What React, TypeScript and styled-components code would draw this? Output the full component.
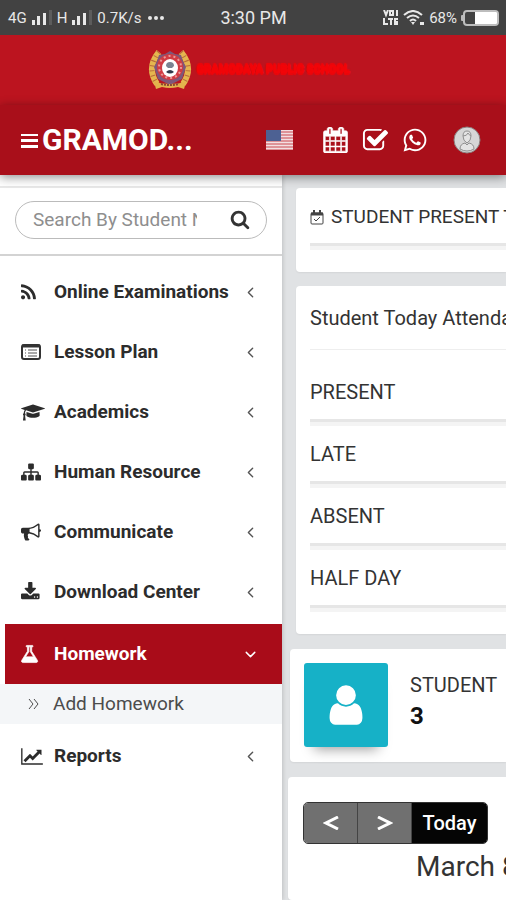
import React from 'react';
import styled, { createGlobalStyle } from 'styled-components';
import { FaWhatsapp } from 'react-icons/fa';
import { FiChevronDown, FiChevronLeft } from 'react-icons/fi';

const GlobalStyle = createGlobalStyle`
  *, *::before, *::after { box-sizing: border-box; }
  body {
    margin: 0;
    background: #e0e2e4;
    color: #333;
    font-family: Roboto, "Liberation Sans", sans-serif;
    font-size: 18px;
    line-height: 24px;
  }
  button, input { font: inherit; color: inherit; }
  button { padding: 0; border: 0; background: none; cursor: pointer; }
  a { color: inherit; text-decoration: none; }
  svg { display: block; flex: none; }
`;

const Page = styled.div`
  display: flex;
  flex-direction: column;
  height: 100vh;
  overflow: hidden;
`;

const StatusBar = styled.div`
  display: grid;
  grid-template-columns: 1fr auto 1fr;
  align-items: center;
  flex: none;
  height: 35px;
  padding: 0 7px 0 8px;
  background: #424242;
  color: #e8e8e8;
  font-size: 15px;
`;

const StatusGroup = styled.div<{ $end?: boolean }>`
  display: flex;
  align-items: center;
  justify-content: ${(p) => (p.$end ? 'flex-end' : 'flex-start')};
  gap: ${(p) => (p.$end ? 4 : 5)}px;
  white-space: nowrap;
`;

const Clock = styled.div`
  font-size: 18px;
`;

const Brand = styled.header`
  display: flex;
  align-items: center;
  justify-content: center;
  flex: none;
  gap: 4px;
  height: 70px;
  padding-right: 8px;
  background: #bc141f;
`;

const BrandName = styled.span`
  color: #f20408;
  font-size: 11px;
  font-weight: 900;
  -webkit-text-stroke: 1px #f20408;
  text-shadow: 0 2px 1px #f20408, 0 -2px 1px #f20408;
  white-space: nowrap;
`;

const NavBar = styled.nav`
  position: relative;
  z-index: 1;
  display: flex;
  align-items: center;
  flex: none;
  height: 70px;
  padding: 0 25px 0 21px;
  background: #a90f1a;
  color: #fff;
  box-shadow: 0 2px 10px rgba(0, 0, 0, 0.45);
`;

const SchoolTitle = styled.button`
  display: flex;
  align-items: center;
  gap: 4px;
  font-size: 30px;
  font-weight: 700;
`;

const NavActions = styled.div`
  display: flex;
  align-items: center;
  margin-left: auto;
`;

const NavButton = styled.button<{ $before?: number }>`
  display: flex;
  margin-left: ${(p) => p.$before ?? 0}px;
`;

const Body = styled.div`
  display: flex;
  flex: 1;
  min-height: 0;
`;

const Sidebar = styled.aside`
  flex: none;
  width: 282px;
  padding-top: 11px;
  background: #fff;
  box-shadow: 1px 0 4px rgba(0, 0, 0, 0.15);
`;

const SearchArea = styled.form`
  padding: 13px 15px 15px;
  border-top: 2px solid #e8e8e8;
  border-bottom: 2px solid #d3d3d3;
`;

const SearchBox = styled.div`
  display: flex;
  align-items: center;
  height: 38px;
  padding: 0 16px 0 17px;
  border: 1px solid #bbb;
  border-radius: 19px;
`;

const SearchInput = styled.input`
  flex: 1;
  min-width: 0;
  margin-right: 33px;
  padding: 0;
  border: 0;
  outline: 0;
  background: none;
  font-size: 19px;
  &::placeholder { color: #8e8e8e; opacity: 1; }
`;

const Menu = styled.ul`
  margin: 0;
  padding: 6px 0 0;
  list-style: none;
`;

const MenuItem = styled.li<{ $active?: boolean }>`
  padding: ${(p) => (p.$active ? '2px 0' : '0')};
`;

const MenuLink = styled.a<{ $active?: boolean }>`
  display: flex;
  align-items: center;
  height: 60px;
  margin-left: 5px;
  padding: 0 23px 0 16px;
  background: ${(p) => (p.$active ? '#a90c19' : 'transparent')};
  color: ${(p) => (p.$active ? '#fff' : '#2c2c2c')};
  font-size: 19px;
  font-weight: 700;
`;

const MenuIcon = styled.span`
  display: flex;
  width: 33px;
`;

const MenuArrow = styled.span`
  display: flex;
  margin-left: auto;
`;

const SubLink = styled.a`
  display: flex;
  align-items: center;
  gap: 14px;
  height: 40px;
  padding-left: 28px;
  background: #f4f6f8;
  color: #4c4c4c;
  font-size: 19px;
`;

const Main = styled.main`
  display: flex;
  flex-direction: column;
  flex: 1;
  min-width: 0;
  overflow: hidden;
  padding-top: 13px;
  white-space: nowrap;
`;

const Card = styled.section<{ $left: number; $gap: number; $pad: string; $grow?: boolean }>`
  flex: ${(p) => (p.$grow ? '1 0 auto' : 'none')};
  margin: 0 0 ${(p) => p.$gap}px ${(p) => p.$left}px;
  padding: ${(p) => p.$pad};
  border-radius: 4px 0 0 4px;
  background: #fff;
  box-shadow: 0 1px 2px rgba(0, 0, 0, 0.06);
`;

const CardTitle = styled.h2`
  display: flex;
  align-items: center;
  gap: 7px;
  margin: 0;
  padding-bottom: 11px;
  font-size: 19px;
  font-weight: 400;
  line-height: 30px;
`;

const AttendanceTitle = styled(CardTitle)`
  margin-bottom: 28px;
  padding-bottom: 16px;
  border-bottom: 1px solid #eee;
  font-size: 20px;
`;

const Meter = styled.div`
  height: 7px;
  border-top: 3px solid #e6e6e6;
  background: #f4f4f4;
`;

const AttendanceRow = styled.div`
  display: flex;
  flex-direction: column;
  gap: 13px;
  height: 62px;
  font-size: 20px;
  line-height: 28px;
`;

const StudentCard = styled(Card)`
  display: flex;
  gap: 22px;
`;

const StudentTile = styled.div`
  display: flex;
  align-items: center;
  justify-content: center;
  width: 84px;
  height: 84px;
  border-radius: 3px;
  background: #16b1c7;
  color: #fff;
  box-shadow: 0 12px 12px -10px rgba(0, 0, 0, 0.4);
`;

const StudentCount = styled.div`
  padding-top: 6px;
  font-size: 20px;
  line-height: 32px;
  strong { display: block; color: #111; font-size: 24px; line-height: 30px; }
`;

const ButtonGroup = styled.div`
  display: inline-flex;
  height: 42px;
  border: 1px solid #333;
  border-radius: 5px;
  overflow: hidden;
`;

const CalendarButton = styled.button<{ $current?: boolean }>`
  display: flex;
  align-items: center;
  justify-content: center;
  width: ${(p) => (p.$current ? 75 : 54)}px;
  border-right: ${(p) => (p.$current ? '0' : '1px solid #444')};
  background: ${(p) => (p.$current ? '#050505' : '#707070')};
  color: #fff;
  font-size: 20px;
  font-weight: 500;
`;

const Month = styled.h2`
  margin: 7px 0 0 113px;
  font-size: 28px;
  font-weight: 400;
  line-height: 32px;
`;

type GlyphProps = { d: string; w: number; h: number; box?: string; bold?: number };
const Glyph = ({ d, w, h, box = '0 0 1792 1792', bold = 0 }: GlyphProps) => (
  <svg width={w} height={h} viewBox={box} fill="currentColor" stroke="currentColor" strokeWidth={bold} aria-hidden="true">
    <path d={d} />
  </svg>
);

const paths = {
  rss: 'M576 1344q0 80-56 136t-136 56-136-56-56-136 56-136 136-56 136 56 56 136zm512 123q2 28-17 48-18 21-47 21h-135q-25 0-43-16.5t-20-41.5q-22-229-184.5-391.5t-391.5-184.5q-25-2-41.5-20t-16.5-43v-135q0-29 21-47 17-17 43-17h5q160 13 306 80.5t259 181.5q114 113 181.5 259t80.5 306zm512 2q2 27-18 47-18 20-46 20h-143q-26 0-44.5-17.5t-19.5-42.5q-12-215-101-408.5t-231.5-336-336-231.5-408.5-102q-25-1-42.5-19.5t-17.5-43.5v-143q0-28 20-46 18-18 44-18h3q262 13 501.5 120t425.5 294q187 186 294 425.5t120 501.5z',
  cap: 'M1774 836l18 316q4 69-82 128t-235 93.5-323 34.5-323-34.5-235-93.5-82-128l18-316 574 181q22 7 48 7t48-7zm530-324q0 23-22 31l-1120 352q-4 1-10 1t-10-1l-652-206q-43 34-71 111.5t-34 178.5q63 36 63 109 0 69-58 107l58 433q2 14-8 25-9 11-24 11h-192q-15 0-24-11-10-11-8-25l58-433q-58-38-58-107 0-73 65-111 11-207 98-330l-333-104q-22-8-22-31t22-31l1120-352q4-1 10-1t10 1l1120 352q22 8 22 31z',
  sitemap: 'M1792 1248v320q0 40-28 68t-68 28h-320q-40 0-68-28t-28-68v-320q0-40 28-68t68-28h96v-192h-512v192h96q40 0 68 28t28 68v320q0 40-28 68t-68 28h-320q-40 0-68-28t-28-68v-320q0-40 28-68t68-28h96v-192h-512v192h96q40 0 68 28t28 68v320q0 40-28 68t-68 28h-320q-40 0-68-28t-28-68v-320q0-40 28-68t68-28h96v-192q0-52 38-90t90-38h512v-192h-96q-40 0-68-28t-28-68v-320q0-40 28-68t68-28h320q40 0 68 28t28 68v320q0 40-28 68t-68 28h-96v192h512q52 0 90 38t38 90v192h96q40 0 68 28t28 68z',
  bullhorn: 'M1664 640q53 0 90.5 37.5t37.5 90.5-37.5 90.5-90.5 37.5v384q0 52-38 90t-90 38q-417-347-812-380-58 19-91 66t-31 100.5 40 92.5q-20 33-23 65.5t6 58 33.5 55 48 50 61.5 50.5q-29 58-111.5 83t-168.5 11.5-132-55.5q-7-23-29.5-87.5t-32-94.5-23-89-15-101 3.5-98.5 22-110.5h-122q-66 0-113-47t-47-113v-192q0-66 47-113t113-47h480q435 0 896-384 52 0 90 38t38 90v384zm-128 604v-954q-394 302-768 343v270q377 42 768 341z',
  download: 'M1344 1344q0-26-19-45t-45-19-45 19-19 45 19 45 45 19 45-19 19-45zm256 0q0-26-19-45t-45-19-45 19-19 45 19 45 45 19 45-19 19-45zm128-224v320q0 40-28 68t-68 28h-1472q-40 0-68-28t-28-68v-320q0-40 28-68t68-28h465l135 136q58 56 136 56t136-56l136-136h464q40 0 68 28t28 68zm-325-569q17 41-14 70l-448 448q-18 19-45 19t-45-19l-448-448q-31-29-14-70 17-39 59-39h256v-448q0-26 19-45t45-19h256q26 0 45 19t19 45v448h256q42 0 59 39z',
  flask: 'M1591 1448q56 89 21.5 152.5t-140.5 63.5h-1152q-106 0-140.5-63.5t21.5-152.5l503-793v-399h-64q-26 0-45-19t-19-45 19-45 45-19h512q26 0 45 19t19 45-19 45-45 19h-64v399zm-779-725l-272 429h712l-272-429-20-31v-436h-128v436z',
  chart: 'M2048 1536v128h-2048v-1536h128v1408h1920zm-128-1248v435q0 21-19.5 29.5t-35.5-7.5l-121-121-633 633q-10 10-23 10t-23-10l-233-233-416 416-192-192 585-585q10-10 23-10t23 10l233 233 464-464-121-121q-16-16-7.5-35.5t29.5-19.5h435q14 0 23 9t9 23z',
  head: 'M1280 512q0 159-112.500 271.500t-271.500 112.500-271.500-112.500-112.500-271.500 112.500-271.500 271.500-112.500 271.500 112.500 112.500 271.500z',
  torso: 'M1536 1399q0 109-62.5 187t-150.500 78h-854q-88 0-150.500-78t-62.500-187q0-85 8.500-160.500t31.500-152 58.500-131 94-89 134.500-34.500q131 128 313 128t313-128q76 0 134.500 34.500t94 89 58.500 131 31.500 152 8.500 160.500z',
  search: 'M1216 832q0-185-131.5-316.5t-316.5-131.5-316.5 131.5-131.5 316.5 131.5 316.5 316.5 131.5 316.5-131.5 131.5-316.5zm512 832q0 52-38 90t-90 38q-54 0-90-38l-343-342q-179 124-399 124-143 0-273.5-55.5t-225-150-150-225-55.5-273.5 55.5-273.5 150-225 225-150 273.5-55.5 273.5 55.5 225 150 150 225 55.5 273.5q0 220-124 399l343 343q37 37 37 90z',
  check: 'M1472 930v318q0 119-84.5 203.5t-203.5 84.5h-832q-119 0-203.5-84.5t-84.5-203.5v-832q0-119 84.5-203.5t203.5-84.5h832q63 0 117 25 15 7 18 23 3 17-9 29l-49 49q-10 10-23 10-3 0-9-2-23-6-45-6h-832q-66 0-113 47t-47 113v832q0 66 47 113t113 47h832q66 0 113-47t47-113v-254q0-13 9-22l64-64q10-10 23-10 6 0 12 3 20 8 20 29zm231-489l-814 814q-24 24-57 24t-57-24l-430-430q-24-24-24-57t24-57l110-110q24-24 57-24t57 24l263 263 647-647q24-24 57-24t57 24l110 110q24 24 24 57t-24 57z',
  calendar: 'M192 1664h288v-288h-288v288zm352 0h320v-288h-320v288zm-352-352h288v-320h-288v320zm352 0h320v-320h-320v320zm-352-384h288v-288h-288v288zm736 736h320v-288h-320v288zm-384-736h320v-288h-320v288zm768 736h288v-288h-288v288zm-384-352h320v-320h-320v320zm-352-864v-288q0-13-9.5-22.5t-22.5-9.5h-64q-13 0-22.5 9.5t-9.5 22.5v288q0 13 9.5 22.5t22.5 9.5h64q13 0 22.5-9.5t9.5-22.5zm736 864h288v-320h-288v320zm-384-384h320v-288h-320v288zm384 0h288v-288h-288v288zm32-480v-288q0-13-9.5-22.5t-22.5-9.5h-64q-13 0-22.5 9.5t-9.5 22.5v288q0 13 9.5 22.5t22.5 9.5h64q13 0 22.5-9.5t9.5-22.5zm384-64v1280q0 52-38 90t-90 38h-1408q-52 0-90-38t-38-90v-1280q0-52 38-90t90-38h128v-96q0-66 47-113t113-47h64q66 0 113 47t47 113v96h384v-96q0-66 47-113t113-47h64q66 0 113 47t47 113v96h128q52 0 90 38t38 90z',
};

const Signal = () => (
  <svg width="20" height="16" viewBox="0 0 20 16" fill="#e8e8e8" aria-hidden="true">
    <rect x="0" y="10" width="3" height="5" /><rect x="5" y="6" width="3" height="9" />
    <rect x="11" y="3" width="3" height="12" /><rect x="17" y="0" width="3" height="15" fill="#5c5c5c" />
  </svg>
);

const More = () => (
  <svg width="18" height="4" viewBox="0 0 18 4" fill="#e8e8e8" aria-hidden="true">
    <circle cx="3" cy="2" r="2" /><circle cx="9" cy="2" r="2" /><circle cx="15" cy="2" r="2" />
  </svg>
);

const Volte = () => (
  <svg width="16" height="15" viewBox="0 0 16 15" fill="none" stroke="#e8e8e8" strokeWidth="2" aria-hidden="true">
    <path d="M1 0l2 5 2-5M7 1h3v4H7zM14 0v6M1 8v6h4M5 9h5M8 9v6M15 9h-3v5h3M12 12h3" />
  </svg>
);

const Wifi = () => (
  <svg width="22" height="16" viewBox="0 0 22 16" fill="none" stroke="#e8e8e8" strokeWidth="2" aria-hidden="true">
    <path d="M1 5q9-8 18 0M4 8q6-5 12 0M7 11q3-3 6 0" />
    <path d="M8 12h4l-2 3z" fill="#e8e8e8" stroke="none" /><rect x="17" y="12" width="4" height="3" fill="#e8e8e8" stroke="none" />
  </svg>
);

const Battery = () => (
  <svg width="38" height="16" viewBox="0 0 38 16" aria-hidden="true">
    <rect x="0" y="5" width="3" height="6" rx="1" fill="#bbb" />
    <rect x="3" y="1" width="34" height="14" rx="3" fill="#424242" stroke="#bdbdbd" strokeWidth="2" />
    <path d="M14 2h21q1 0 1 1v10q0 1-1 1H14z" fill="#fff" />
  </svg>
);

const Crest = () => (
  <svg width="44" height="40" viewBox="0 0 44 40" aria-hidden="true">
    <g fill="none" stroke="#e5b64f" strokeWidth="6">
      <path d="M11 2Q-2 18 9 34" /><path d="M33 2q13 16 2 32" />
    </g>
    <g fill="none" stroke="#b86a3a" strokeWidth="5" strokeDasharray="1 4">
      <path d="M11 2Q-2 18 9 34" /><path d="M33 2q13 16 2 32" />
    </g>
    <path d="M22 1l5 3 6 1 2 6 3 6-2 6-2 6-6 3-6 3-6-3-6-3-2-6-2-6 3-6 2-6 6-1z" fill="#7d587a" />
    <circle cx="22" cy="17" r="13" fill="#d13b43" />
    <circle cx="22" cy="17" r="11" fill="none" stroke="#e99a98" strokeWidth="2" strokeDasharray="2 3" />
    <ellipse cx="22" cy="18" rx="8" ry="9" fill="#fff" />
    <path d="M18 16q0-4 4-4t4 4l-2 2h-4z" fill="#7b8492" /><path d="M18 22q4-4 8 0-4 3-8 0z" fill="#30394b" />
    <path d="M6 32q16 4 32 0l-2 7-6-2q-8 2-16 0l-6 2z" fill="#e3b24c" />
    <path d="M13 34q9 2 18 0" fill="none" stroke="#8b4834" strokeWidth="2" strokeDasharray="2 1" />
  </svg>
);

const Burger = () => (
  <svg width="17" height="16" viewBox="0 0 17 16" fill="#fff" aria-hidden="true">
    <rect y="2" width="17" height="2" /><rect y="7" width="17" height="3" /><rect y="13" width="17" height="3" />
  </svg>
);

const Flag = () => (
  <svg width="27" height="20" viewBox="0 0 27 20" aria-hidden="true">
    <rect width="27" height="20" fill="#f3dfe1" />
    <path d="M0 2h27M0 5h27M0 8h27M0 11h27M0 14h27M0 17h27M0 20h27" stroke="#c9474f" strokeWidth="1" />
    <rect width="15" height="11" fill="#4d6193" />
  </svg>
);

const Avatar = () => (
  <svg width="28" height="28" viewBox="0 0 28 28" aria-hidden="true">
    <circle cx="14" cy="14" r="13" fill="#d6d6d6" stroke="#8c7f7f" />
    <g fill="#e3e3e3" stroke="#8f8f8f" strokeWidth="1">
      <path d="M7 23q0-5 5-6l2 2 2-2q5 1 5 6-7 4-14 0z" />
      <path d="M10 10q0-5 4-5t4 5q0 5-4 7-4-2-4-7z" /><path d="M10 10q4 0 5-3 1 2 3 3" fill="none" />
    </g>
  </svg>
);

const ListCard = () => (
  <svg width="20" height="16" viewBox="0 0 20 16" fill="none" stroke="#333" aria-hidden="true">
    <rect x="1" y="1" width="18" height="14" rx="2" strokeWidth="2" /><path d="M1 2h18" strokeWidth="3" />
    <path d="M4 6h1M4 9h1M4 12h1M7 6h9M7 9h9M7 12h9" stroke="#555" strokeWidth="1" />
  </svg>
);

const CalendarCheck = () => (
  <svg width="14" height="15" viewBox="0 0 14 15" fill="none" stroke="#444" aria-hidden="true">
    <rect x="1" y="3" width="12" height="11" rx="1" /><path d="M1 4h12" strokeWidth="3" />
    <path d="M4 0v3M10 0v3" strokeWidth="2" /><path d="M4 9l2 2 4-4" />
  </svg>
);

const UserIcon = () => (
  <svg width="46" height="46" viewBox="0 0 1792 1792" fill="currentColor" aria-hidden="true">
    <path d={paths.head} /><path d={paths.torso} />
  </svg>
);

const Angle = ({ next }: { next?: boolean }) => (
  <svg width="16" height="14" viewBox="0 0 16 14" fill="none" stroke="#fff" strokeWidth="3" aria-hidden="true">
    <path d={next ? 'M1 1l12 6-12 6' : 'M15 1L3 7l12 6'} />
  </svg>
);

const items = [
  { label: 'Online Examinations', icon: <Glyph d={paths.rss} w={19} h={19} box="192 0 1792 1792" /> },
  { label: 'Lesson Plan', icon: <ListCard /> },
  { label: 'Academics', icon: <Glyph d={paths.cap} w={24} h={19} box="0 0 2304 1792" /> },
  { label: 'Human Resource', icon: <Glyph d={paths.sitemap} w={20} h={20} /> },
  { label: 'Communicate', icon: <Glyph d={paths.bullhorn} w={20} h={20} /> },
  { label: 'Download Center', icon: <Glyph d={paths.download} w={20} h={20} box="64 0 1792 1792" /> },
  { label: 'Homework', icon: <Glyph d={paths.flask} w={20} h={20} box="128 0 1792 1792" bold={60} />, sub: 'Add Homework' },
  { label: 'Reports', icon: <Glyph d={paths.chart} w={22} h={19} box="0 0 2048 1792" /> },
];

export default function App() {
  return (
    <Page>
      <GlobalStyle />
      <StatusBar>
        <StatusGroup>
          <span>4G</span><Signal /><span>H</span><Signal /><span>0.7K/s</span><More />
        </StatusGroup>
        <Clock>3:30 PM</Clock>
        <StatusGroup $end><Volte /><Wifi /><span>68%</span><Battery /></StatusGroup>
      </StatusBar>
      <Brand><Crest /><BrandName>GRAMODAYA PUBLIC SCHOOL</BrandName></Brand>
      <NavBar>
        <SchoolTitle><Burger />GRAMOD...</SchoolTitle>
        <NavActions>
          <NavButton aria-label="Language"><Flag /></NavButton>
          <NavButton $before={30} aria-label="Calendar"><Glyph d={paths.calendar} w={25} h={26} box="64 0 1664 1792" bold={40} /></NavButton>
          <NavButton $before={14} aria-label="Tasks"><Glyph d={paths.check} w={27} h={27} /></NavButton>
          <NavButton $before={13} aria-label="WhatsApp"><FaWhatsapp size={26} /></NavButton>
          <NavButton $before={25} aria-label="Profile"><Avatar /></NavButton>
        </NavActions>
      </NavBar>
      <Body>
        <Sidebar>
          <SearchArea>
            <SearchBox>
              <SearchInput type="text" aria-label="Search by student" placeholder="Search By Student Name" />
              <button type="button" aria-label="Search"><Glyph d={paths.search} w={20} h={20} box="0 128 1792 1664" /></button>
            </SearchBox>
          </SearchArea>
          <Menu>
            {items.map(({ label, icon, sub }) => (
              <MenuItem key={label} $active={!!sub}>
                <MenuLink href="#" $active={!!sub}>
                  <MenuIcon>{icon}</MenuIcon>{label}
                  <MenuArrow>{sub ? <FiChevronDown size={17} /> : <FiChevronLeft size={17} color="#555" />}</MenuArrow>
                </MenuLink>
                {sub && (
                  <SubLink href="#">
                    <svg width="11" height="12" viewBox="0 0 11 12" fill="none" stroke="currentColor" aria-hidden="true">
                      <path d="M1 1l4 5-4 5M6 1l4 5-4 5" />
                    </svg>
                    {sub}
                  </SubLink>
                )}
              </MenuItem>
            ))}
          </Menu>
        </Sidebar>
        <Main>
          <Card $left={14} $gap={14} $pad="14px 0 22px 14px">
            <CardTitle><CalendarCheck />STUDENT PRESENT TODAY</CardTitle>
            <Meter />
          </Card>
          <Card $left={14} $gap={15} $pad="17px 0 8px 14px">
            <AttendanceTitle>Student Today Attendance</AttendanceTitle>
            {['PRESENT', 'LATE', 'ABSENT', 'HALF DAY'].map((name) => (
              <AttendanceRow key={name}>{name}<Meter /></AttendanceRow>
            ))}
          </Card>
          <StudentCard $left={8} $gap={15} $pad="14px 0 15px 14px">
            <StudentTile><UserIcon /></StudentTile>
            <StudentCount>STUDENT<strong>3</strong></StudentCount>
          </StudentCard>
          <Card $left={6} $gap={0} $pad="25px 0 0 15px" $grow>
            <ButtonGroup>
              <CalendarButton aria-label="Previous"><Angle /></CalendarButton>
              <CalendarButton aria-label="Next"><Angle next /></CalendarButton>
              <CalendarButton $current>Today</CalendarButton>
            </ButtonGroup>
            <Month>March 8, 2020</Month>
          </Card>
        </Main>
      </Body>
    </Page>
  );
}
